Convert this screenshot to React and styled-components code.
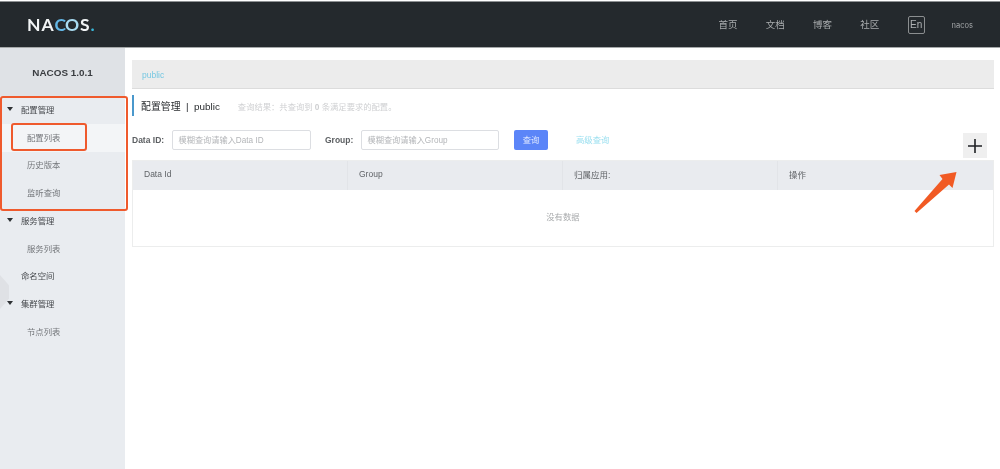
import React from "react";
import styled, { createGlobalStyle } from "styled-components";

const Global = createGlobalStyle`
  html, body { margin: 0; padding: 0; background: #fff; }
  body { font-family: "Liberation Sans", "Noto Sans CJK SC", sans-serif; }
  * { box-sizing: border-box; }
`;
const Page = styled.div`
  position: relative;
  width: 1000px;
  height: 469px;
  overflow: hidden;
  background: #fff;
  filter: blur(0.5px);
`;
const Header = styled.header`
  height: 47px;
  margin-top: 1px;
  background: #24292d;
  border-top: 1px solid #8e9193;
  border-bottom: 1px solid #a5a8a9;
  display: flex;
  align-items: center;
  justify-content: space-between;
  padding: 0 27px 0 27px;
`;
const Logo = styled.div`
  display: flex;
  align-items: center;
  font-family: "Lato", "Liberation Sans", sans-serif;
  font-size: 17.5px;
  font-weight: 700;
  letter-spacing: 0.9px;
  color: #f2f5f6;
  height: 20px;
`;
const LogoPart = styled.span`
  color: ${p => p.$c || "#f2f5f6"};
  margin-left: ${p => p.$ml || 0}px;
`;
const Nav = styled.nav`
  display: flex;
  align-items: center;
`;
const NavLink = styled.span`
  width: 19px;
  margin-right: 28.25px;
  font-size: 9.5px;
  line-height: 14px;
  white-space: nowrap;
  color: #a9acae;
`;
const Lang = styled.span`
  width: 17px;
  height: 18px;
  margin-right: 27px;
  border: 1px solid #8b8e90;
  border-radius: 2px;
  display: flex;
  align-items: center;
  justify-content: center;
  font-size: 10px;
  color: #b0b3b5;
`;
const User = styled.span`
  font-family: "Inter", "Liberation Sans", sans-serif;
  font-size: 7.5px;
  margin-top: 2px;
  color: #a3a6a8;
`;
const Body = styled.div`
  display: flex;
  height: 421px;
`;
const Sidebar = styled.aside`
  position: relative;
  width: 125px;
  flex: none;
  background: #e9ecf0;
`;
const SideTitle = styled.div`
  height: 48px;
  background: #dfe2e6;
  display: flex;
  align-items: center;
  justify-content: center;
  font-size: 9.9px;
  font-weight: 700;
  color: #3a3d41;
`;
const Menu = styled.ul`
  list-style: none;
  margin: 0;
  padding: 0;
`;
const Item = styled.li`
  height: 27.75px;
  display: flex;
  align-items: center;
  padding: 0 0 2px ${p => (p.$sub ? 27 : 21)}px;
  font-size: 8.4px;
  color: ${p => (p.$sub ? "#75787c" : "#46494d")};
  background: ${p => (p.$active ? "#f3f5f7" : "transparent")};
`;
const Caret = styled.span`
  position: absolute;
  left: 7px;
  width: 0;
  height: 0;
  border-left: 3.5px solid transparent;
  border-right: 3.5px solid transparent;
  border-top: 4px solid #2e3134;
`;
const Hexagon = styled.div`
  position: absolute;
  left: 0;
  top: 227px;
  width: 9px;
  height: 34px;
  background: #dfe1e5;
  clip-path: polygon(0 0, 100% 30%, 100% 70%, 0 100%);
`;
const Main = styled.main`
  flex: 1;
  min-width: 0;
  padding: 12px 6px 0 7px;
`;
const Crumb = styled.div`
  height: 29px;
  padding: 2px 0 0 10px;
  display: flex;
  align-items: center;
  background: #ececec;
  border-bottom: 1px solid #dcdcdc;
  font-size: 8.5px;
  color: #78c8e2;
`;
const TitleRow = styled.div`
  height: 21px;
  margin-top: 6px;
  padding-left: 7px;
  display: flex;
  align-items: center;
  border-left: 2px solid #4a98cc;
`;
const Title = styled.h1`
  margin: 0;
  font-size: 9.9px;
  font-weight: 400;
  color: #2a2d30;
  white-space: pre;
`;
const Hint = styled.span`
  margin-left: 18px;
  font-size: 8.3px;
  color: #cfd0d2;
`;
const Toolbar = styled.div`
  height: 30px;
  margin-top: 14px;
  display: flex;
  align-items: flex-start;
`;
const Label = styled.label`
  width: ${p => p.$w}px;
  height: 20px;
  display: flex;
  align-items: center;
  font-size: 8.5px;
  font-weight: 700;
  color: #5c5f62;
`;
const Field = styled.div`
  width: ${p => p.$w}px;
  height: 20px;
  margin-right: ${p => p.$mr}px;
  padding: 0 0 2px 5.5px;
  display: flex;
  align-items: center;
  border: 1px solid #dcdee2;
  border-radius: 2px;
  font-size: 8.2px;
  color: #b4b6b9;
`;
const Search = styled.button`
  width: 34px;
  height: 20px;
  padding: 0 0 2px;
  border: 0;
  border-radius: 2px;
  background: #5b85f8;
  color: #dfe8ff;
  font-family: inherit;
  font-size: 8.4px;
`;
const Advanced = styled.a`
  margin-left: 28px;
  line-height: 20px;
  font-size: 8.4px;
  color: #9de0f0;
`;
const Add = styled.button`
  width: 24px;
  height: 25px;
  margin: 3px 7px 0 auto;
  padding: 0;
  border: 0;
  background: #efefef;
  display: flex;
  align-items: center;
  justify-content: center;
`;
const Table = styled.div`
  height: 87px;
  border: 1px solid #eceded;
`;
const Head = styled.div`
  height: 29px;
  display: grid;
  grid-template-columns: 215px 215px 215px 1fr;
  background: #e9ebef;
`;
const Th = styled.div`
  padding: 0 0 3px 11px;
  display: flex;
  align-items: center;
  border-right: ${p => (p.$last ? 0 : "1px solid #e2e4e8")};
  font-size: 8.5px;
  color: #606367;
`;
const Empty = styled.div`
  height: 55px;
  padding-bottom: 4px;
  display: flex;
  align-items: center;
  justify-content: center;
  font-size: 8.4px;
  color: #a9abad;
`;
const Callout = styled.div`
  position: absolute;
  left: ${p => p.$l}px;
  top: ${p => p.$t}px;
  width: ${p => p.$w}px;
  height: ${p => p.$h}px;
  border: 2px solid #ef5a2d;
  border-radius: 3px;
  pointer-events: none;
`;
const Arrow = styled.svg`
  position: absolute;
  left: 910px;
  top: 168px;
`;

const menu = [
  ["配置管理", "group"], ["配置列表", "active"], ["历史版本", "sub"], ["监听查询", "sub"],
  ["服务管理", "group"], ["服务列表", "sub"], ["命名空间", "plain"], ["集群管理", "group"], ["节点列表", "sub"],
];

export default function App() {
  return (
    <Page>
      <Global />
      <Header>
        <Logo>
          <LogoPart>NA</LogoPart>
          <LogoPart $c="#63b7e6">C</LogoPart>
          <LogoPart $c="#a9dcf2" $ml={-2}>O</LogoPart>
          <LogoPart>S</LogoPart>
          <LogoPart $c="#38b6d8">.</LogoPart>
        </Logo>
        <Nav>
          <NavLink>首页</NavLink>
          <NavLink>文档</NavLink>
          <NavLink>博客</NavLink>
          <NavLink>社区</NavLink>
          <Lang>En</Lang>
          <User>nacos</User>
        </Nav>
      </Header>
      <Body>
        <Sidebar>
          <SideTitle>NACOS 1.0.1</SideTitle>
          <Menu>
            {menu.map(([t, k]) => (
              <Item key={t} $sub={k === "sub" || k === "active"} $active={k === "active"}>
                {k === "group" && <Caret />}
                {t}
              </Item>
            ))}
          </Menu>
          <Hexagon />
        </Sidebar>
        <Main>
          <Crumb>public</Crumb>
          <TitleRow>
            <Title>配置管理  |  public</Title>
            <Hint>查询结果：共查询到 <b>0</b> 条满足要求的配置。</Hint>
          </TitleRow>
          <Toolbar>
            <Label $w={40}>Data ID:</Label>
            <Field $w={139} $mr={14}>模糊查询请输入Data ID</Field>
            <Label $w={36}>Group:</Label>
            <Field $w={138} $mr={15}>模糊查询请输入Group</Field>
            <Search>查询</Search>
            <Advanced>高级查询</Advanced>
            <Add aria-label="add">
              <svg width="16" height="16" viewBox="0 0 16 16">
                <path d="M8 1v14M1 8h14" stroke="#1f2124" strokeWidth="1.6" fill="none" />
              </svg>
            </Add>
          </Toolbar>
          <Table>
            <Head>
              <Th>Data Id</Th>
              <Th>Group</Th>
              <Th>归属应用:</Th>
              <Th $last>操作</Th>
            </Head>
            <Empty>没有数据</Empty>
          </Table>
        </Main>
      </Body>
      <Callout $l={0} $t={96} $w={128} $h={115} />
      <Callout $l={11} $t={123} $w={76} $h={28} />
      <Arrow width="50" height="46" viewBox="0 0 50 46">
        <path d="M46.5 4 L29.5 7 L32.5 11 L4.5 43 L6.5 45 L39 16.5 L42.5 20 Z" fill="#f15a24" />
      </Arrow>
    </Page>
  );
}
